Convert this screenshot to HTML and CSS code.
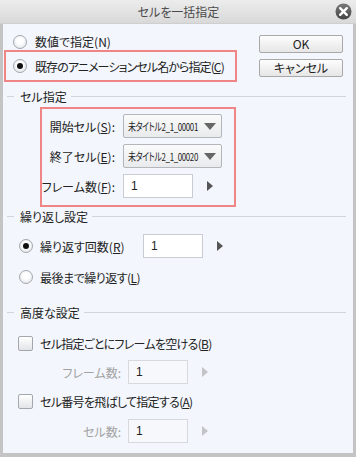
FILE: index.html
```html
<!DOCTYPE html>
<html>
<head>
    <meta charset="utf-8">
    <link rel="stylesheet" href="styles.css">
</head>
<body>
    <div class="window">
        <div class="titlebar">
            <span></span>
            <span class="title">セルを一括指定</span>
            <span class="close">
                <svg width="17" height="17" viewBox="0 0 17 17">
                    <defs>
                        <linearGradient id="cg" x1="0" y1="0" x2="0" y2="1">
                            <stop offset="0" stop-color="#7a7a7a"/>
                            <stop offset="1" stop-color="#444"/>
                        </linearGradient>
                    </defs>
                    <circle cx="8.5" cy="8.5" r="8" fill="url(#cg)"/>
                    <path d="M5.2 5.2 L11.8 11.8 M11.8 5.2 L5.2 11.8" stroke="#fff" stroke-width="2.4" stroke-linecap="round"/>
                </svg>
            </span>
        </div>

        <div class="content">
            <div class="top">
                <div class="options">
                    <div class="radio-row first">
                        <span class="radio"></span>
                        <span>数値で指定(N)</span>
                    </div>
                    <div class="radio-row highlight">
                        <span class="radio checked"></span>
                        <span>既存のアニメーションセル名から指定(<u>C</u>)</span>
                    </div>
                </div>
                <div class="buttons">
                    <button class="btn">OK</button>
                    <button class="btn">キャンセル</button>
                </div>
            </div>

            <div class="section-head head-cell"><span>セル指定</span></div>
            <div class="cell-box">
                <div class="field-row">
                    <span class="field-label">開始セル(<u>S</u>):</span>
                    <div class="dropdown"><span class="dd-text">未タイトル2_1_00001</span><span class="caret"></span></div>
                </div>
                <div class="field-row">
                    <span class="field-label">終了セル(<u>E</u>):</span>
                    <div class="dropdown"><span class="dd-text">未タイトル2_1_00020</span><span class="caret"></span></div>
                </div>
                <div class="field-row">
                    <span class="field-label">フレーム数(<u>F</u>):</span>
                    <div class="num-input">1</div>
                    <span class="spin"></span>
                </div>
            </div>

            <div class="section-head head-repeat"><span>繰り返し設定</span></div>
            <div class="repeat-row count-row">
                <span class="radio checked"></span>
                <span class="repeat-label">繰り返す回数(<u>R</u>)</span>
                <div class="num-input short">1</div>
                <span class="spin"></span>
            </div>
            <div class="repeat-row end-row">
                <span class="radio"></span>
                <span>最後まで繰り返す(<u>L</u>)</span>
            </div>

            <div class="section-head head-adv"><span>高度な設定</span></div>
            <div class="check-row">
                <span class="checkbox"></span>
                <span>セル指定ごとにフレームを空ける(<u>B</u>)</span>
            </div>
            <div class="sub-row">
                <span class="sub-label">フレーム数:</span>
                <div class="num-input short disabled">1</div>
                <span class="spin off"></span>
            </div>
            <div class="check-row">
                <span class="checkbox"></span>
                <span>セル番号を飛ばして指定する(<u>A</u>)</span>
            </div>
            <div class="sub-row">
                <span class="sub-label">セル数:</span>
                <div class="num-input short disabled">1</div>
                <span class="spin off"></span>
            </div>
        </div>
    </div>
</body>
</html>
```

FILE: styles.css
```css
body {
    margin: 0;
    font-family: "Noto Sans CJK JP", "Noto Sans", sans-serif;
    font-size: 12px;
    font-feature-settings: "palt";
    color: #222;
    background: #c6c6c6;
    white-space: nowrap;
}

u {
    text-decoration: underline;
    text-underline-offset: 1px;
}

.window {
    width: 356px;
    height: 457px;
    box-sizing: border-box;
    border: 3px solid #c4c4c4;
    border-top: 0;
    border-bottom-width: 4px;
    background: #f3f6fc;
    display: flex;
    flex-direction: column;
}

.titlebar {
    height: 23px;
    margin: 0 -3px;
    background: linear-gradient(#ececec, #d9d9d9);
    border-bottom: 1px solid #cfcfcf;
    display: grid;
    grid-template-columns: 1fr auto 1fr;
    align-items: center;
}

.title {
    color: #4a4a4a;
    padding-left: 1px;
}

.close {
    justify-self: end;
    margin-right: 4px;
    display: flex;
}

.content {
    flex: 1;
}

.top {
    display: flex;
    padding-top: 9px;
}

.options {
    margin-left: 1px;
    width: 233px;
}

.radio-row {
    display: flex;
    align-items: center;
    gap: 8px;
    padding-left: 9px;
    height: 17px;
}

.radio-row.highlight {
    box-sizing: border-box;
    height: 32px;
    border: 2px solid #f08585;
    padding-left: 7px;
    letter-spacing: -0.9px;
}

.radio {
    width: 14px;
    height: 14px;
    box-sizing: border-box;
    border: 1px solid #a3a8af;
    border-radius: 50%;
    background: radial-gradient(circle at 50% 40%, #ffffff 30%, #dcdee2 100%);
    display: flex;
    align-items: center;
    justify-content: center;
    flex-shrink: 0;
}

.radio.checked::after {
    content: "";
    width: 6px;
    height: 6px;
    border-radius: 50%;
    background: #111;
}

.buttons {
    margin-left: auto;
    margin-right: 10px;
    margin-top: 2px;
    display: flex;
    flex-direction: column;
    gap: 6px;
}

.btn {
    width: 84px;
    height: 18px;
    padding: 0;
    font-family: inherit;
    font-size: 12px;
    font-feature-settings: "palt";
    color: #222;
    border: 1px solid #a8a8a8;
    border-radius: 2px;
    background: linear-gradient(#fdfdfd, #e6e6e6);
    line-height: 14px;
}

.section-head {
    display: flex;
    align-items: center;
    height: 14px;
    padding-left: 4px;
    padding-right: 7px;
}

.section-head::before {
    content: "";
    width: 7px;
    border-top: 1px solid #d2d6dc;
}

.section-head::after {
    content: "";
    flex: 1;
    border-top: 1px solid #d2d6dc;
}

.section-head span {
    margin: 0 4px 0 6px;
}

.head-cell {
    margin-top: 7px;
}

.cell-box {
    margin: 4px 0 0 37px;
    width: 196px;
    box-sizing: border-box;
    border: 2px solid #f08585;
    padding: 5px 0 7px 0;
    display: flex;
    flex-direction: column;
    gap: 6px;
}

.field-row {
    display: flex;
    align-items: center;
    height: 24px;
}

.field-label {
    width: 73px;
    margin-right: 8px;
    display: flex;
    justify-content: flex-end;
    flex-shrink: 0;
}

.dropdown {
    width: 99px;
    height: 24px;
    flex-shrink: 0;
    box-sizing: border-box;
    border: 1px solid #b3b6bb;
    border-radius: 2px;
    background: linear-gradient(#fbfbfb, #e9eaec);
    display: flex;
    align-items: center;
    padding-left: 4px;
}

.dd-text {
    flex: 0 0 76px;
    min-width: 0;
    font-size: 11px;
    letter-spacing: -0.5px;
    transform: scaleX(0.72);
    transform-origin: left center;
}

.dropdown .caret {
    margin-left: auto;
    margin-right: 5px;
    flex-shrink: 0;
    width: 0;
    height: 0;
    border-left: 6px solid transparent;
    border-right: 6px solid transparent;
    border-top: 7px solid #666;
}

.num-input {
    width: 70px;
    height: 24px;
    flex-shrink: 0;
    box-sizing: border-box;
    border: 1px solid #c9cdd3;
    background: #fff;
    display: flex;
    align-items: center;
    padding-left: 7px;
    font-family: "Liberation Sans", sans-serif;
}

.num-input.short {
    width: 60px;
}

.num-input.disabled {
    background: #f6f8fb;
    border-color: #d6dae0;
}

.spin {
    width: 0;
    height: 0;
    margin-left: 14px;
    border-top: 5px solid transparent;
    border-bottom: 5px solid transparent;
    border-left: 6px solid #555;
}

.spin.off {
    border-left-color: #c2c4c8;
}

.head-repeat {
    margin-top: 2px;
}

.repeat-row {
    display: flex;
    align-items: center;
    padding-left: 16px;
}

.repeat-row .radio {
    margin-right: 7px;
}

.count-row {
    margin-top: 11px;
    height: 24px;
}

.repeat-label {
    width: 103px;
}

.end-row {
    margin-top: 9px;
    height: 20px;
    letter-spacing: -0.5px;
}

.head-adv {
    margin-top: 18px;
}

.check-row {
    display: flex;
    align-items: center;
    height: 20px;
    padding-left: 15px;
    gap: 7px;
    margin-top: 14px;
    letter-spacing: -0.7px;
}

.check-row + .sub-row + .check-row {
    margin-top: 7px;
}

.checkbox {
    width: 15px;
    height: 15px;
    box-sizing: border-box;
    border: 1px solid #a3a8af;
    border-radius: 2px;
    background: linear-gradient(#ffffff, #e2e4e8);
}

.sub-row {
    display: flex;
    align-items: center;
    height: 24px;
    margin-top: 7px;
}

.sub-row:last-child {
    margin-top: 8px;
}

.sub-label {
    width: 118px;
    margin-right: 7px;
    text-align: right;
    color: #a2a2a2;
}
```
